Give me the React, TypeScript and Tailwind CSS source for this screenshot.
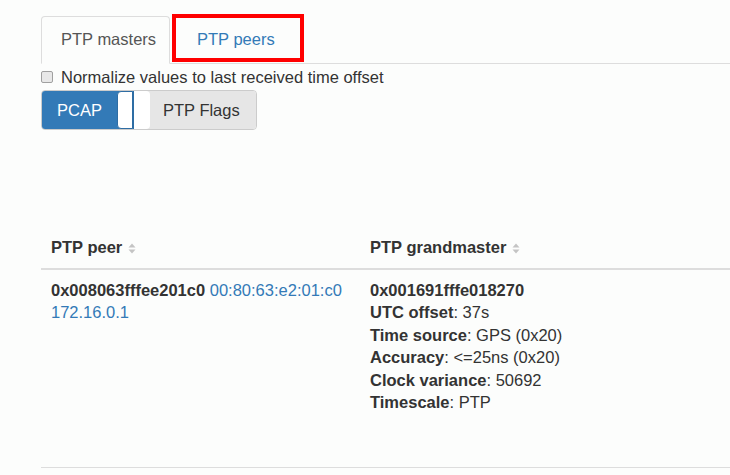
import React from "react";

function SortIcon() {
  return (
    <svg width="8" height="11" viewBox="0 0 8 11" className="inline-block ml-[6px] align-[-1px]">
      <path d="M4 0.5 L7.5 4.5 L0.5 4.5 Z" fill="#c4c4c4" />
      <path d="M4 10.5 L7.5 6.5 L0.5 6.5 Z" fill="#c4c4c4" />
    </svg>
  );
}

export default function App() {
  return (
    <div className="w-[730px] h-[475px] bg-[#fcfdfc] text-[#333333] text-[16.5px] overflow-hidden" style={{ fontFamily: '"Liberation Sans", Arial, sans-serif' }}>
      <div className="pl-[41px] pt-[16px]">
        {/* Tabs */}
        <div className="flex border-b border-[#dddddd] h-[48px]">
          <div className="h-[48px] w-[129px] border border-[#dddddd] border-b-transparent bg-[#fcfdfc] rounded-t-[4px] flex items-center pl-[19px] -mb-px">
            <span className="text-[#555555] -mt-[2px]">PTP masters</span>
          </div>
          <div className="relative w-[135px] h-[48px] flex items-center pl-[27px]">
            <span className="text-[#337ab7] -mt-[2px]">PTP peers</span>
            <div className="absolute left-[2px] top-[-2px] w-[132px] h-[48px] border-[4px] border-[#ff0000]" />
          </div>
        </div>
        {/* Checkbox */}
        <div className="flex items-center h-[26px]">
          <div className="w-[12px] h-[12px] border border-[#a0a0a0] rounded-[2px] bg-[#e8e8e8]" />
          <span className="ml-[8px] text-[#333333]">Normalize values to last received time offset</span>
        </div>
        {/* Toggle */}
        <div className="flex w-[216px] h-[40px] rounded-[4px] overflow-hidden border border-[#cccccc]">
          <div className="w-[92px] bg-[#337ab7] border-r border-[#2e6da4] flex items-center relative">
            <span className="text-white pl-[15px]">PCAP</span>
            <div className="absolute right-0 top-0 h-full w-[16px] bg-white rounded-l-[4px] border border-[#2e6da4]" />
          </div>
          <div className="flex-1 bg-[#e6e6e6] flex items-center relative">
            <div className="h-full w-[16px] bg-white rounded-r-[4px]" />
            <span className="text-[#333333] ml-[13px]">PTP Flags</span>
          </div>
        </div>
        {/* Table */}
        <div className="mt-[97px]">
          <div className="flex h-[43px] items-center border-b-2 border-[#dddddd] font-bold">
            <div className="w-[319px] pl-[10px]">PTP peer<SortIcon /></div>
            <div className="pl-[10px]">PTP grandmaster<SortIcon /></div>
          </div>
          <div className="flex border-b border-[#dddddd] h-[198px] pt-[9px] leading-[22.4px]">
            <div className="w-[319px] pl-[10px]">
              <div>
                <span className="font-bold">0x008063fffee201c0</span>{" "}
                <span className="text-[#337ab7]">00:80:63:e2:01:c0</span>
              </div>
              <div className="text-[#337ab7]">172.16.0.1</div>
            </div>
            <div className="pl-[10px]">
              <div className="font-bold">0x001691fffe018270</div>
              <div><span className="font-bold">UTC offset</span>: 37s</div>
              <div><span className="font-bold">Time source</span>: GPS (0x20)</div>
              <div><span className="font-bold">Accuracy</span>: &lt;=25ns (0x20)</div>
              <div><span className="font-bold">Clock variance</span>: 50692</div>
              <div><span className="font-bold">Timescale</span>: PTP</div>
            </div>
          </div>
        </div>
      </div>
    </div>
  );
}
